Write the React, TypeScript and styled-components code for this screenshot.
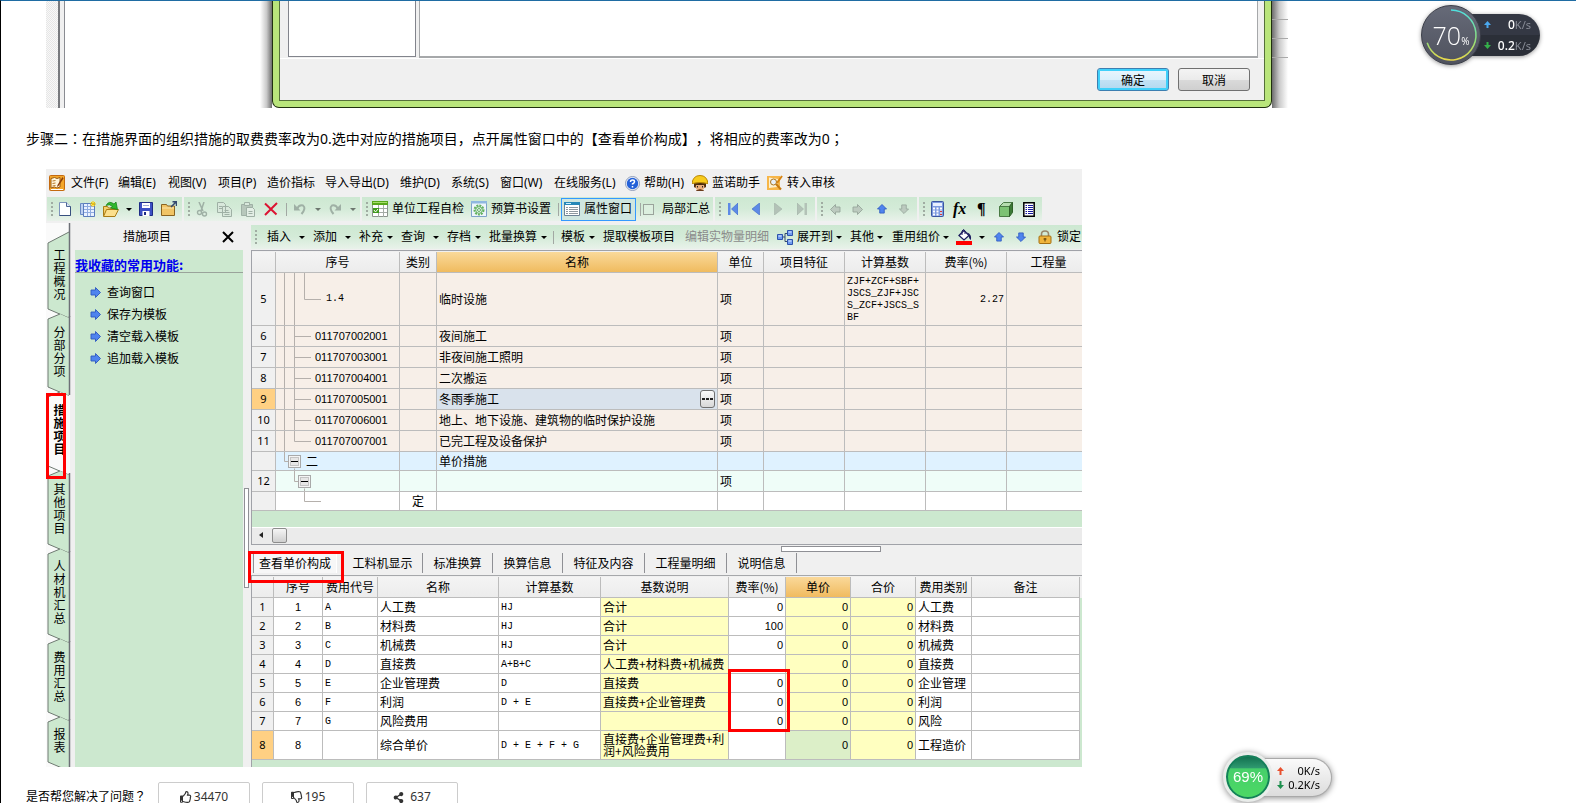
import React from "react";
import styled, { createGlobalStyle, css } from "styled-components";
import { FaRegThumbsUp, FaRegThumbsDown, FaShareAlt } from "react-icons/fa";

const sans = '"Noto Sans", "Noto Sans CJK SC", sans-serif';
const cjk = '"Noto Sans CJK SC", sans-serif';
const mono = '"Liberation Mono", "Noto Sans CJK SC", monospace';
const green = "#cce8cf";
const face = "#f0f0f0";
const line = "#bcbcbc";

const GlobalStyle = createGlobalStyle`
  *, *::before, *::after { box-sizing: border-box; }
  body { margin: 0; background: #fff; color: #000; font: 12px/16px ${sans}; text-spacing-trim: space-all; }
  button { font: inherit; color: inherit; padding: 0; border: 0; background: none; cursor: pointer; }
  svg { display: block; flex: none; }
`;

const Page = styled.div`
  position: relative;
  height: 100vh;
  overflow: hidden;
  border-left: 1px solid #000;
  border-top: 1px solid #1f6ca3;
`;

/* ---------- dialog at the top ---------- */
const DialogShot = styled.div`
  display: flex;
  max-width: 1242px;
  height: 107px;
  margin-left: 45px;
  overflow: hidden;
`;
const Edge = styled.div`
  flex: none;
  width: 19px;
  margin-right: 195px;
  background: #f0f0f0;
  border-right: 1px solid #8a8c92;
  display: flex;
  &::before {
    content: "";
    width: 14px;
    border-right: 2px solid #77797d;
    background: repeating-conic-gradient(#e6e6e6 0 25%, #f8f8f8 0 50%) 0 0 / 2px 2px;
  }
`;
const Shade = styled.div<{ $right?: boolean }>`
  flex: none;
  width: ${(p) => (p.$right ? 16 : 12)}px;
  background: linear-gradient(${(p) => (p.$right ? "to right" : "to left")}, #6d6d6d, #c9c9c9 45%, #fff);
  ${(p) =>
    p.$right &&
    css`
      background:
        repeating-linear-gradient(transparent 0 18px, #a9a9a9 18px 19px) 0 0 / 100% 57px no-repeat,
        linear-gradient(to right, #6d6d6d, #c9c9c9 45%, #fff);
    `}
`;
const Dialog = styled.section`
  flex: 1;
  min-width: 0;
  border: solid #20300f;
  border-width: 0 1px 1px;
  border-radius: 0 0 7px 7px;
  background: #b9e57b;
  padding: 0 6px 6px;
`;
const DialogInner = styled.div`
  height: 100%;
  border: solid #55703a;
  border-width: 0 1px 1px;
  background: ${face};
  display: flex;
  flex-direction: column;
`;
const Panes = styled.div`
  display: flex;
  gap: 3px;
  height: 58px;
  padding: 0 6px 0 8px;
  border-bottom: 1px solid #fff;
`;
const Pane = styled.div<{ $grow?: boolean }>`
  background: #fff;
  border: 1px solid #82848c;
  border-top: 0;
  ${(p) => (p.$grow ? "flex: 1; border-bottom-width: 2px; border-color: #a6a8aa;" : "width: 128px; height: 56px;")}
`;
const DialogButtons = styled.div`
  display: flex;
  justify-content: flex-end;
  gap: 9px;
  padding: 9px 14px 0 0;
`;
const WinButton = styled.button<{ $primary?: boolean }>`
  width: 72px;
  height: 23px;
  border: 1px solid #707070;
  border-radius: 3px;
  background: linear-gradient(#f4f4f4, #ebebeb 50%, #dadada 51%, #cfcfcf);
  font-family: ${cjk};
  ${(p) =>
    p.$primary &&
    css`
      border-color: #3c7fb1;
      box-shadow: inset 0 0 0 2px #3fd0fa;
      background: linear-gradient(#eaf6fd, #d9f0fc 50%, #c3e2f5 51%, #b0d8ef);
    `}
`;

const Step = styled.p`
  margin: 20px 25px 0;
  font-size: 14px;
  line-height: 22px;
`;
const Mid = styled.span`
  font-family: "Noto Sans CJK TC", sans-serif;
  line-height: 1px;
`;

/* ---------- application window ---------- */
const AppWindow = styled.section`
  position: relative;
  max-width: 1036px;
  margin: 19px 0 0 45px;
  background: ${face};
  overflow: hidden;
`;
const MenuBar = styled.nav`
  display: flex;
  align-items: center;
  height: 28px;
  padding-left: 3px;
`;
const Slot = styled.button<{ $w: number; $muted?: boolean }>`
  flex: none;
  width: ${(p) => p.$w}px;
  height: 24px;
  display: flex;
  align-items: center;
  text-align: left;
  white-space: nowrap;
  color: ${(p) => (p.$muted ? "#8b8b8b" : "#000")};
`;
const Toolbar = styled.div`
  display: flex;
  gap: 2px;
  height: 26px;
  padding-left: 1px;
`;
const Band = styled.div<{ $w?: number }>`
  display: flex;
  align-items: center;
  height: 24px;
  ${(p) => (p.$w ? `flex: none; width: ${p.$w}px;` : "margin-top: 2px;")}
  background: linear-gradient(#cde8d2, #d4ebd8 50%, #e9f2ea);
  overflow: hidden;
`;
const Grip = styled.span<{ $w: number }>`
  flex: none;
  width: ${(p) => p.$w}px;
  height: 15px;
  padding-left: 4px;
  &::before {
    content: "";
    display: block;
    width: 2px;
    height: 100%;
    background: repeating-linear-gradient(#a0aca2 0 2px, transparent 2px 4px);
  }
`;
const Sep = styled.span<{ $w: number }>`
  flex: none;
  width: ${(p) => p.$w}px;
  height: 13px;
  border-left: 1px solid #a2a8a3;
`;
const Toggled = styled.button`
  flex: none;
  width: 75px;
  height: 23px;
  margin-right: 4px;
  display: flex;
  align-items: center;
  gap: 4px;
  padding-left: 2px;
  border: 1px solid #3399ff;
  background: #cfe6e0;
  white-space: nowrap;
`;
const Check = styled.label`
  display: flex;
  align-items: center;
  gap: 8px;
  white-space: nowrap;
  input {
    appearance: none;
    width: 11px;
    height: 11px;
    margin: 0;
    border: 1px solid #9aa39b;
    background: #dcefdf;
  }
`;
const Glyph = styled.span<{ $italic?: boolean }>`
  font: ${(p) => (p.$italic ? "italic" : "normal")} bold 16px/16px "Liberation Serif", serif;
`;

const Body = styled.div`
  display: flex;
`;
const SideTabs = styled.nav`
  flex: none;
  width: 29px;
  padding-top: 15px;
  padding-left: 2px;
  overflow: hidden;
  background: linear-gradient(to right, #fafafa 0 24px, ${face} 24px);
`;
const SideTab = styled.button<{ $h: number; $active?: boolean }>`
  position: relative;
  display: flex;
  align-items: center;
  justify-content: center;
  width: 23px;
  height: ${(p) => p.$h}px;
  padding-bottom: 5px;
  line-height: 13px;
  font-family: ${cjk};
  font-weight: ${(p) => (p.$active ? 700 : 400)};
  svg {
    position: absolute;
    left: 0;
    top: 0;
    overflow: visible;
  }
  span {
    position: relative;
    width: 12px;
  }
`;
const Side = styled.aside`
  flex: none;
  width: 168px;
  display: flex;
  flex-direction: column;
`;
const SideHead = styled.div`
  display: flex;
  align-items: center;
  height: 27px;
  padding: 0 9px 0 48px;
  justify-content: space-between;
`;
const SideBody = styled.div`
  flex: 1;
  background: ${green};
`;
const SideTitle = styled.h2`
  margin: 0 0 8px;
  height: 23px;
  padding-top: 7px;
  border-bottom: 1px solid #9aa39b;
  color: #0000f0;
  font: bold 13px/16px ${cjk};
`;
const SideLink = styled.a`
  display: flex;
  align-items: center;
  gap: 6px;
  height: 22px;
  padding-left: 15px;
  color: #000;
  text-decoration: none;
  font-family: ${cjk};
`;
const Splitter = styled.div`
  flex: none;
  width: 8px;
  padding: 265px 2px 0 1px;
  &::before {
    content: "";
    display: block;
    height: 100px;
    border: 1px solid #8f9095;
    background: #fff;
  }
`;
const Main = styled.main`
  flex: 1;
  min-width: 0;
`;
const Frame = styled.div`
  border-left: 1px solid #a0a2a8;
`;
const TopLine = styled.div`
  height: 2px;
  margin-top: 1px;
  border-top: 1px solid #a0a2a8;
`;

/* ---------- grids ---------- */
const Grid = styled.table`
  width: 100%;
  table-layout: fixed;
  border-collapse: separate;
  border-spacing: 0;
  font-family: ${cjk};
  line-height: 12px;
`;
const Th = styled.th<{ $hot?: boolean }>`
  height: 21px;
  padding: 0;
  border: solid ${line};
  border-width: 0 1px 1px 0;
  background: ${(p) => (p.$hot ? "linear-gradient(#fad99a, #f0bb5f)" : "linear-gradient(#f4f4f4, #ececec)")};
  font-weight: 400;
  white-space: nowrap;
`;
const LastTh = styled(Th)`
  border-right: 0;
  padding-left: 8px;
`;
type CellProps = { $h?: number; $bg?: string; $align?: string; $mono?: boolean; $num?: boolean; $flush?: boolean };
const Td = styled.td<CellProps>`
  height: ${(p) => p.$h ?? 19}px;
  padding: ${(p) => (p.$flush ? "0" : p.$mono ? "2px 2px 0" : "0 2px")};
  border: solid ${line};
  border-width: 0 1px 1px 0;
  background: ${(p) => p.$bg ?? "#fff"};
  text-align: ${(p) => p.$align ?? "left"};
  vertical-align: middle;
  white-space: nowrap;
  overflow: hidden;
  ${(p) => p.$mono && `font-family: ${mono}; font-size: 10px;`}
  ${(p) => p.$num && `font-family: "Liberation Sans", sans-serif; font-size: 11px;`}
`;
const LastTd = styled(Td)`
  border-right: 0;
`;
const RowHead = styled(Th)<{ $on?: boolean; $h?: number }>`
  height: ${(p) => p.$h ?? 19}px;
  background: ${(p) => (p.$on ? "#ffd083" : face)};
  font-family: ${sans};
  font-size: 11px;
`;
const Wrap = styled.span`
  display: block;
  white-space: normal;
  word-break: break-all;
`;
const Tree = styled.div`
  display: flex;
  align-items: center;
  gap: 5px;
`;
const NameCell = styled.div`
  display: flex;
  justify-content: space-between;
  align-items: center;
`;
const Dots = styled.button`
  width: 15px;
  height: 18px;
  border: 1px solid #707070;
  border-radius: 3px;
  background: linear-gradient(#fafafa, #d8d8d8);
  display: flex;
  align-items: center;
  justify-content: center;
`;
const Filler = styled.div<{ $h: number }>`
  height: ${(p) => p.$h}px;
  background: ${green};
`;
const ScrollBar = styled.div`
  display: flex;
  align-items: center;
  gap: 9px;
  height: 18px;
  padding: 0 0 2px 7px;
  background: #ebebeb;
  border-bottom: 1px solid #a0a2a8;
  border-top: 1px solid #fff;
`;
const Thumb = styled.span`
  width: 15px;
  height: 15px;
  border: 1px solid #8c8c8c;
  border-radius: 2px;
  background: linear-gradient(#f5f5f5, #cfcfcf);
`;
const HandleRow = styled.div`
  height: 8px;
  padding: 1px 201px 0 0;
  display: flex;
  justify-content: flex-end;
  &::before {
    content: "";
    width: 100px;
    height: 6px;
    border: 1px solid #8f9095;
    background: #fff;
  }
`;
const Tabs = styled.div`
  display: flex;
  height: 23px;
  padding-left: 2px;
  border-bottom: 1px solid #a6a8ab;
`;
const Tab = styled.button<{ $w: number; $active?: boolean }>`
  flex: none;
  width: ${(p) => p.$w}px;
  height: 20px;
  border-right: 1px solid #8f9095;
  font-family: ${cjk};
  ${(p) => p.$active && "border-left: 1px solid #8f9095; background: #f7f7f7; border-right-color: #fff; margin-right: 6px;"}
`;
const BottomArea = styled.div`
  padding: 1px 2px 7px 0;
  background: linear-gradient(${face} 22px, ${green} 22px);
`;
const Mark = styled.div<{ $x: number; $y: number; $w: number; $h: number }>`
  position: absolute;
  left: ${(p) => p.$x}px;
  top: ${(p) => p.$y}px;
  width: ${(p) => p.$w}px;
  height: ${(p) => p.$h}px;
  border: 3px solid #f00;
  pointer-events: none;
`;

/* ---------- feedback row ---------- */
const Feedback = styled.footer`
  display: flex;
  gap: 12px;
  padding: 15px 0 0 25px;
  line-height: 12px;
`;
const Ask = styled.span`
  width: 120px;
  padding-top: 9px;
  white-space: nowrap;
`;
const Vote = styled.button<{ $gap: number }>`
  display: flex;
  align-items: center;
  justify-content: center;
  gap: ${(p) => p.$gap}px;
  width: 92px;
  height: 30px;
  border: 1px solid #ccc;
  border-radius: 2px;
  color: #333;
`;

/* ---------- floating meters ---------- */
const DarkMeter = styled.div`
  position: absolute;
  right: 36px;
  top: 4px;
  display: flex;
  align-items: center;
  filter: drop-shadow(0 1px 2px rgba(0, 0, 0, 0.4));
`;
const DarkDial = styled.div`
  position: relative;
  z-index: 1;
  width: 60px;
  height: 60px;
  margin-right: -19px;
  border-radius: 50%;
  border: 1px solid #3b3e49;
  background: linear-gradient(#666a78, #4f525e);
  display: flex;
  align-items: center;
  justify-content: center;
  color: #fff;
  font: 300 25px/30px "Open Sans", sans-serif;
  svg {
    position: absolute;
    inset: 0;
  }
  small {
    font-size: 10px;
    font-weight: 400;
    align-self: flex-end;
    margin-bottom: 8px;
  }
`;
const DarkRates = styled.div`
  width: 78px;
  height: 42px;
  padding: 0 9px 0 22px;
  border-radius: 0 21px 21px 0;
  background: linear-gradient(#343844 50%, #2b2f38 50%);
`;
const Rate = styled.div<{ $h: number }>`
  display: flex;
  align-items: center;
  height: ${(p) => p.$h}px;
  font-size: 11px;
  span {
    margin-left: auto;
  }
`;
const White = styled.b`
  color: #fff;
  font-size: 12px;
  font-weight: 500;
`;
const Dim = styled.i`
  color: #888c96;
  font-style: normal;
`;
const LightMeter = styled.div`
  position: absolute;
  right: 244px;
  bottom: 1px;
  display: flex;
  align-items: center;
  filter: drop-shadow(0 1px 3px rgba(0, 0, 0, 0.45));
`;
const GreenDial = styled.div`
  position: relative;
  z-index: 1;
  width: 50px;
  height: 50px;
  margin-right: -20px;
  border-radius: 50%;
  border: 3px solid #e9ecea;
  box-shadow: inset 0 0 0 2px #14805a;
  background: linear-gradient(#0f6b4c, #2f9a70 30%, #46cf6a 31%, #4cd964);
  display: flex;
  align-items: center;
  justify-content: center;
  color: #fff;
  font: 15px/20px "Liberation Sans", sans-serif;
`;
const LightRates = styled.div`
  width: 79px;
  height: 39px;
  padding: 5px 11px 0 24px;
  border: 1px solid #a9a9a9;
  border-left: 0;
  border-radius: 0 20px 20px 0;
  background: linear-gradient(#fafafa, #dcdcdc);
`;

/* ---------- icons ---------- */
const Ico = ({ w = 16, h = 16, children }: { w?: number; h?: number; children: React.ReactNode }) => (
  <svg width={w} height={h} viewBox={`0 0 ${w} ${h}`} fill="none">
    {children}
  </svg>
);
const Caret = ({ muted }: { muted?: boolean }) => (
  <Ico w={6} h={3}>
    <path d="M0 0H6L3 3Z" fill={muted ? "#6d776f" : "#000"} />
  </Ico>
);
const AppIcon = () => (
  <Ico>
    <rect x=".5" y=".5" width="15" height="15" rx="1" fill="#f3a62a" stroke="#c46a10" />
    <path d="M2 3.500l3.500-1 2.500 1 3-1V12l-3 1-2.500-1-3.500 1z" fill="#fff6da" stroke="#9a5a10" />
    <path d="M3.500 6l3-.5M3.500 8.500l3-.5M3.500 11l3-.5" stroke="#b87a2a" />
    <path d="M13.500 2L8.500 10l-.5 2 1.500-1L14.500 3.500z" fill="#8a3d0a" />
    <path d="M2 14.500h12" stroke="#fff" />
  </Ico>
);
const HelpIcon = () => (
  <Ico w={15} h={15}>
    <circle cx="7.500" cy="7.500" r="7" fill="#f2f5fb" stroke="#8d9bb8" />
    <circle cx="7.500" cy="7.500" r="5.700" fill="#2461d8" />
    <path d="M5.500 6q0-2 2-2t2 1.700q0 1-2 2.300v.6M7.500 10v1.500" stroke="#fff" strokeWidth="1.500" />
  </Ico>
);
const WorkerIcon = () => (
  <Ico>
    <path d="M3 8h10v4l-2 3H5l-2-3z" fill="#e9ad7c" />
    <path d="M2 7h12v5l-1.500 1L12 10H4l-.5 3L2 12z" fill="#4a2a10" />
    <path d="M0 8.500Q1 .5 8 .5t8 8q-8-2-16 0z" fill="#f7cb1c" stroke="#b98704" />
    <path d="M5.500 11v1.500M10.500 11v1.500" stroke="#222" />
    <path d="M4 15.500l4-1.500 4 1.500v.5H4z" fill="#6b3a1a" />
  </Ico>
);
const AuditIcon = () => (
  <Ico>
    <path d="M0 1h13v14H0z" fill="#f7b648" />
    <path d="M2 2.500l9 1.500-1 8-8 1z" fill="#fdf0cf" />
    <circle cx="6.500" cy="7" r="3" fill="#e8f0f8" stroke="#a9741e" />
    <path d="M9 9l5 5.500" stroke="#c67a12" strokeWidth="2" />
    <path d="M15 1l-5 7" stroke="#d88410" strokeWidth="2" />
  </Ico>
);
const NewIcon = () => (
  <Ico w={12} h={14}>
    <path d="M.5.5h7l4 4v9H.5z" fill="#fff" stroke="#7d93bb" />
    <path d="M7.500.5v4h4" fill="#dbe5f5" stroke="#4c6595" />
    <path d="M11.500 4.500v9H.5" stroke="#38507f" />
  </Ico>
);
const SheetIcon = () => (
  <Ico>
    <path d="M.5 2.500h3v11h-3z" fill="#bcd0f2" stroke="#6a8ac4" />
    <path d="M3.500 2.500h11v13h-11z" fill="#e9f1ff" stroke="#5a7cbc" />
    <path d="M4 5.500h10M4 8.500h10M4 11.500h10M7.500 3v12M10.500 3v12" stroke="#8fabe0" />
    <path d="M13 0v6M10 3h6M11 1l4 4M15 1l-4 4" stroke="#f5c800" />
  </Ico>
);
const OpenIcon = () => (
  <Ico>
    <path d="M.5 15V5.500h4l1 1.500h6v2" fill="#f5d06a" stroke="#a87c14" />
    <path d="M.5 15.500l3-7h12l-3.500 7z" fill="#fbe08c" stroke="#a87c14" />
    <path d="M3 4.500Q6-1 11 3l2-2 1.500 7.500L7.500 7l2-1.500Q6.500 2.500 3 4.500z" fill="#2eb82e" stroke="#0e7a12" strokeWidth=".7" />
  </Ico>
);
const SaveIcon = () => (
  <Ico w={14} h={14}>
    <path d="M.5.5h13v13h-13z" fill="#3c50c4" stroke="#1f2d86" />
    <path d="M3 1h8v5H3zM3.500 9h7v5h-7z" fill="#fff" />
    <path d="M4 3.500h6" stroke="#9aa8d8" />
    <path d="M5 10h2v3H5z" fill="#1f2d86" />
  </Ico>
);
const FolderIcon = () => (
  <Ico>
    <path d="M.5 3.500h5l1 1.500h7v9.500H.5z" fill="#f1c565" stroke="#8a6420" />
    <path d="M1 7h12" stroke="#fbe5a8" />
    <path d="M10 6l5-5M11.500.8h4V5" stroke="#33486e" strokeWidth="1.500" />
  </Ico>
);
const gray = "#9fb0a5";
const CutIcon = () => (
  <Ico w={12} h={15}>
    <path d="M3 0l4 9M8 0L5 9" stroke={gray} strokeWidth="1.500" />
    <circle cx="3.500" cy="10.500" r="2" stroke={gray} strokeWidth="1.400" />
    <circle cx="8.500" cy="12" r="2" stroke={gray} strokeWidth="1.400" />
  </Ico>
);
const CopyIcon = () => (
  <Ico w={15} h={15}>
    <path d="M.5.5h6l2 2v8h-8zM5.500 4.500h6l3 3v7h-9z" fill="#d9e8dc" stroke={gray} />
    <path d="M2 4.500h3M2 6.500h3M7.500 8.500h4M7.500 10.500h5M7.500 12.500h5" stroke={gray} />
  </Ico>
);
const PasteIcon = () => (
  <Ico w={14} h={15}>
    <path d="M.5 2.500h11v11H.5z" fill="#b7c7bb" stroke={gray} />
    <path d="M3.500.5h5v3h-5z" fill="#d9e8dc" stroke={gray} />
    <path d="M5.500 5.500h6l2 2v7h-8z" fill="#e3eee5" stroke={gray} />
    <path d="M7.500 9.500h4M7.500 11.500h4" stroke={gray} />
  </Ico>
);
const DeleteIcon = () => (
  <Ico w={14} h={14}>
    <path d="M1 1.500l11.500 11M13 1L1 13" stroke="#dc1432" strokeWidth="2" />
  </Ico>
);
const UndoIcon = ({ flip }: { flip?: boolean }) => (
  <Ico w={12} h={12}>
    <g transform={flip ? "matrix(-1 0 0 1 12 0)" : undefined}>
      <path d="M3 6Q5 1.500 9 2.500 12.500 5 7.500 11" stroke={gray} strokeWidth="2" />
      <path d="M0 1v6.500h6.500z" fill={gray} />
    </g>
  </Ico>
);
const CheckSheetIcon = () => (
  <Ico>
    <path d="M.5.5h15v15H.5z" fill="#fff" stroke="#8b958d" />
    <path d="M0 0h16v4H0z" fill="#57a81a" />
    <path d="M1 1.500h14" stroke="#a5dd6a" />
    <path d="M1 7.500h14M1 11.500h14M6.500 4v12M11.500 4v12" stroke="#a4aca6" />
    <path d="M1 7h6v5H1z" fill="#3f9a1c" />
    <path d="M2 9l1.500 2L6 8" stroke="#fff" />
  </Ico>
);
const GearIcon = () => (
  <Ico>
    <path d="M.5.5h15v15H.5z" fill="#eef5fb" stroke="#7fa3c8" />
    <path d="M0 0h16v2.500H0z" fill="#8fb8e0" />
    <circle cx="8" cy="9" r="4.500" stroke="#63b25e" strokeWidth="2" strokeDasharray="2 1" />
    <circle cx="8" cy="9" r="3.300" stroke="#63b25e" />
    <circle cx="8" cy="9" r="1.500" stroke="#63b25e" />
  </Ico>
);
const PropIcon = () => (
  <Ico>
    <path d="M.5 1.500h15v13H.5z" fill="#fff" stroke="#6c8296" />
    <path d="M0 1h16v3H0z" fill="#2688b8" />
    <path d="M2 2.500h5" stroke="#cdefff" />
    <path d="M2 6.500h2M5 6.500h9M2 8.500h2M5 8.500h9M2 10.500h2M5 10.500h9M2 12.500h2M5 12.500h9" stroke="#8d979f" />
  </Ico>
);
const NavIcon = ({ dir, bar, muted }: { dir: "l" | "r"; bar?: boolean; muted?: boolean }) => {
  const c = muted ? "#b3c2b7" : "#5d8ae6";
  return (
    <Ico w={10} h={12}>
      <g transform={dir === "r" ? "matrix(-1 0 0 1 10 0)" : undefined}>
        {bar && <path d="M0 0h2.500v12H0z" fill={c} />}
        <path d={bar ? "M10 0v12L3.500 6z" : "M7.500 0v12L0 6z"} fill={c} stroke={muted ? "#a3b2a7" : "#3d66c8"} strokeWidth=".6" />
      </g>
    </Ico>
  );
};
const Arrow = ({ rot, muted, size = 11 }: { rot: number; muted?: boolean; size?: number }) => (
  <svg width={size} height={size} viewBox="0 0 11 11" fill="none">
    <g transform={`rotate(${rot} 5.5 5.5)`}>
      <path
        d="M5.500.5L10.500 5.500H8V10H3V5.500H.5Z"
        fill={muted ? "#bccabf" : "#4f84ee"}
        stroke={muted ? "#96a69b" : "#2d58c0"}
        strokeWidth=".9"
      />
    </g>
  </svg>
);
const CalcIcon = () => (
  <Ico w={13} h={16}>
    <rect x=".5" y=".5" width="12" height="15" rx="1" fill="#7d9be0" stroke="#3a55a0" />
    <path d="M2 2h9v3H2z" fill="#e8f0ff" />
    <path d="M2 7.500h9M2 10.500h9M2 13.500h9" stroke="#fff" strokeWidth="2" strokeDasharray="2 1.500" />
    <path d="M9 10h2v1H9zM9 13h2v1H9z" fill="#d83a3a" />
  </Ico>
);
const CubeIcon = () => (
  <Ico w={14} h={15}>
    <path d="M.5 4.500l4-4h9l-3 4z" fill="#b5dcae" stroke="#4a7a45" />
    <path d="M.5 4.500h10v10H.5z" fill="#7cc273" stroke="#4a7a45" />
    <path d="M10.500 4.500l3-4v10l-3 4z" fill="#3b7a35" stroke="#2f6029" />
  </Ico>
);
const ListIcon = () => (
  <Ico w={12} h={15}>
    <path d="M.8.8h10.400v13.400H.8z" fill="#fff" stroke="#000" strokeWidth="1.500" />
    <path d="M2.500 3.500h1.500M5 3.500h5M2.500 5.500h1.500M5 5.500h5M2.500 7.500h1.500M5 7.500h5M2.500 9.500h1.500M5 9.500h5M2.500 11.500h1.500M5 11.500h5" stroke="#16169c" />
  </Ico>
);
const ExpandIcon = () => (
  <Ico w={17} h={15}>
    <path d="M5 7h3M8 3.500v8M8 3.500h3M8 11.500h3" stroke="#33486e" />
    <path d="M.5 4.500h5v5h-5zM10.500.5h5v5h-5zM10.500 9.500h5v5h-5z" fill="#6f9bf0" stroke="#2d52ac" />
    <path d="M1.500 6h3M11.500 2h3M11.500 11h3" stroke="#e6efff" />
  </Ico>
);
const BucketIcon = () => (
  <Ico>
    <path d="M3 6.500l5-5 5 5-5 4.500z" fill="#fff" stroke="#1b1b5e" strokeWidth="1.300" />
    <path d="M6 6V2q1.500-3 3 0v3" stroke="#1b1b5e" />
    <path d="M11 3.500q5 1.500 4 7.500Q12.500 9.500 13 6.500z" fill="#1b1b5e" />
    <path d="M0 12h16v4H0z" fill="#f00" />
  </Ico>
);
const LockIcon = () => (
  <Ico w={14} h={14}>
    <path d="M3.500 7V4Q3.500 1 7 1t3.500 3v3" stroke="#98866a" strokeWidth="1.600" />
    <rect x="1" y="6" width="12" height="7.500" rx="1" fill="#f0b53c" stroke="#a36f12" />
    <path d="M7 8v3.500M5.500 9h3" stroke="#5d3e05" />
  </Ico>
);
const CloseIcon = () => (
  <Ico w={12} h={12}>
    <path d="M1 1l10 10M11 1L1 11" stroke="#000" strokeWidth="2" />
  </Ico>
);

const T = ({ w, children, muted, label }: { w: number; children: React.ReactNode; muted?: boolean; label?: string }) => (
  <Slot $w={w} $muted={muted} aria-label={label}>
    {children}
  </Slot>
);

/* ---------- data ---------- */
const sideTabs: [string, number][] = [
  ["工程概况", 76],
  ["分部分项", 78],
  ["措施项目", 79],
  ["其他项目", 78],
  ["人材机汇总", 90],
  ["费用汇总", 78],
  ["报表", 50],
];

const peach = "#f7efe8";
type Row = { n: string; tree: string; code?: string; cls?: string; name?: string; unit?: string; h: number; bg: string };
const rows: Row[] = [
  { n: "5", tree: "deep", code: "1.4", name: "临时设施", unit: "项", h: 53, bg: peach },
  { n: "6", tree: "mid", code: "011707002001", name: "夜间施工", unit: "项", h: 21, bg: peach },
  { n: "7", tree: "mid", code: "011707003001", name: "非夜间施工照明", unit: "项", h: 21, bg: peach },
  { n: "8", tree: "mid", code: "011707004001", name: "二次搬运", unit: "项", h: 21, bg: peach },
  { n: "9", tree: "mid", code: "011707005001", name: "冬雨季施工", unit: "项", h: 21, bg: peach },
  { n: "10", tree: "mid", code: "011707006001", name: "地上、地下设施、建筑物的临时保护设施", unit: "项", h: 21, bg: peach },
  { n: "11", tree: "end", code: "011707007001", name: "已完工程及设备保护", unit: "项", h: 21, bg: peach },
  { n: "", tree: "box1", code: "二", name: "单价措施", h: 19, bg: "#dff2ff" },
  { n: "12", tree: "box2", unit: "项", h: 21, bg: "#effdf8" },
  { n: "", tree: "leaf", cls: "定", h: 19, bg: "#fff" },
];

const MinusBox = ({ x, y }: { x: number; y: number }) => (
  <g>
    <rect x={x + 0.5} y={y - 5.5} width="12" height="12" fill="#f4f4f4" stroke="#a9a9a9" />
    <rect x={x + 2.5} y={y - 3.5} width="8" height="8" fill="#e6e6e6" stroke="#c4c4c4" />
    <path d={`M${x + 3} ${y + 0.5}h7`} stroke="#000" />
  </g>
);
const TreeLines = ({ kind, h }: { kind: string; h: number }) => {
  const m = Math.floor((h - 1) / 2) + 0.5;
  const b = h - 1;
  const paths: Record<string, string> = {
    deep: `M8.500 0V${b}M18.500 0V${b}M28.500 0V${m}H45`,
    mid: `M8.500 0V${b}M18.500 0V${b}M18.500 ${m}H35`,
    end: `M8.500 0V${b}M18.500 0V${m}H35`,
    box1: `M8.500 0V${m}H12M18.500 ${m + 7}V${b}`,
    box2: `M18.500 0V${m}H22M28.500 ${m + 7}V${b}`,
    leaf: `M28.500 0V${m}H45`,
  };
  const widths: Record<string, number> = { deep: 45, mid: 34, end: 34, box1: 25, box2: 46, leaf: 46 };
  const w = widths[kind];
  return (
    <svg width={w} height={b} viewBox={`0 0 ${w} ${b}`} overflow="visible">
      <path d={paths[kind]} stroke="#b5b0ac" fill="none" />
      {kind === "box1" && <MinusBox x={12} y={m - 0.5} />}
      {kind === "box2" && <MinusBox x={22} y={m - 0.5} />}
    </svg>
  );
};

type Fee = [string, string, string, string, string, string, string];
const fees: Fee[] = [
  ["1", "A", "人工费", "HJ", "合计", "0", "人工费"],
  ["2", "B", "材料费", "HJ", "合计", "100", "材料费"],
  ["3", "C", "机械费", "HJ", "合计", "0", "机械费"],
  ["4", "D", "直接费", "A+B+C", "人工费+材料费+机械费", "", "直接费"],
  ["5", "E", "企业管理费", "D", "直接费", "0", "企业管理"],
  ["6", "F", "利润", "D + E", "直接费+企业管理费", "0", "利润"],
  ["7", "G", "风险费用", "", "", "0", "风险"],
  ["8", "", "综合单价", "D + E + F + G", "直接费+企业管理费+利润+风险费用", "", "工程造价"],
];

const Cols = ({ w }: { w: number[] }) => (
  <colgroup>
    {w.map((x, i) => (
      <col key={i} width={x || undefined} />
    ))}
  </colgroup>
);

export default function App() {
  const yellow = "#ffffc0";
  return (
    <Page>
      <GlobalStyle />
      <DialogShot>
        <Edge />
        <Shade />
        <Dialog>
          <DialogInner>
            <Panes>
              <Pane />
              <Pane $grow />
            </Panes>
            <DialogButtons>
              <WinButton $primary>确定</WinButton>
              <WinButton>取消</WinButton>
            </DialogButtons>
          </DialogInner>
        </Dialog>
        <Shade $right />
      </DialogShot>

      <Step>
        步骤二<Mid>：</Mid>在措施界面的组织措施的取费费率改为0.选中对应的措施项目，点开属性窗口中的【查看单价构成】，将相应的费率改为0
        <Mid>；</Mid>
      </Step>

      <AppWindow>
        <MenuBar>
          <T w={22} label="应用"><AppIcon /></T>
          <T w={47}>文件(F)</T>
          <T w={50}>编辑(E)</T>
          <T w={50}>视图(V)</T>
          <T w={49}>项目(P)</T>
          <T w={58}>造价指标</T>
          <T w={75}>导入导出(D)</T>
          <T w={51}>维护(D)</T>
          <T w={49}>系统(S)</T>
          <T w={54}>窗口(W)</T>
          <T w={71}>在线服务(L)</T>
          <T w={19} label="帮助图标"><HelpIcon /></T>
          <T w={48}>帮助(H)</T>
          <T w={20} label="助手图标"><WorkerIcon /></T>
          <T w={55}>蓝诺助手</T>
          <T w={20} label="审核图标"><AuditIcon /></T>
          <T w={60}>转入审核</T>
        </MenuBar>

        <Toolbar>
          <Band $w={135}>
            <Grip $w={12} />
            <T w={21} label="新建"><NewIcon /></T>
            <T w={23} label="新建表"><SheetIcon /></T>
            <T w={23} label="打开"><OpenIcon /></T>
            <T w={13} label="更多"><Caret /></T>
            <T w={22} label="保存"><SaveIcon /></T>
            <T w={20} label="另存"><FolderIcon /></T>
          </Band>
          <Band $w={176}>
            <Grip $w={12} />
            <T w={21} label="剪切"><CutIcon /></T>
            <T w={24} label="复制"><CopyIcon /></T>
            <T w={23} label="粘贴"><PasteIcon /></T>
            <T w={22} label="删除"><DeleteIcon /></T>
            <Sep $w={8} />
            <T w={21} label="撤销"><UndoIcon /></T>
            <T w={14} label="撤销列表"><Caret muted /></T>
            <T w={21} label="重做"><UndoIcon flip /></T>
            <T w={10} label="重做列表"><Caret muted /></T>
          </Band>
          <Band $w={351}>
            <Grip $w={10} />
            <T w={20} label="自检图标"><CheckSheetIcon /></T>
            <T w={79}>单位工程自检</T>
            <T w={20} label="设置图标"><GearIcon /></T>
            <T w={67}>预算书设置</T>
            <Sep $w={3} />
            <Toggled><PropIcon />属性窗口</Toggled>
            <Sep $w={3} />
            <Check>
              <input type="checkbox" />
              局部汇总
            </Check>
          </Band>
          <Band $w={100}>
            <Grip $w={13} />
            <T w={24} label="首条"><NavIcon dir="l" bar /></T>
            <T w={20} label="上一条"><NavIcon dir="l" /></T>
            <T w={25} label="下一条"><NavIcon dir="r" muted /></T>
            <T w={12} label="末条"><NavIcon dir="r" bar muted /></T>
          </Band>
          <Band $w={100}>
            <Grip $w={13} />
            <T w={22} label="左移"><Arrow rot={-90} muted /></T>
            <T w={25} label="右移"><Arrow rot={90} muted /></T>
            <T w={22} label="上移"><Arrow rot={0} size={10} /></T>
            <T w={12} label="下移"><Arrow rot={180} size={10} muted /></T>
          </Band>
          <Band $w={123}>
            <Grip $w={12} />
            <T w={22} label="计算器"><CalcIcon /></T>
            <T w={24}><Glyph $italic>fx</Glyph></T>
            <T w={22}><Glyph>¶</Glyph></T>
            <T w={24} label="三维"><CubeIcon /></T>
            <T w={14} label="列表"><ListIcon /></T>
          </Band>
        </Toolbar>

        <Body>
          <SideTabs>
            {sideTabs.map(([name, h], i) => {
              const active = i === 2;
              const top = i === 0 ? "M0 5L21-6" : "M0 5L12 0L21 4";
              return (
                <SideTab key={name} $h={h} $active={active}>
                  <svg width="23" height={h}>
                    <path d={`${top}V${h + 4}L0 ${h - 5}Z`} fill={active ? "#fafafa" : green} />
                    <path
                      d={i === 0 ? `M21-6L0 5V${h - 5}L21 ${h + 4}` : `M12 0L0 5V${h - 5}L21 ${h + 4}`}
                      stroke="#6f7a72"
                      fill="none"
                    />
                    {!active && <path d={`M21.500 ${i === 0 ? -16 : 2}V${h + 3}`} stroke="#6d7077" strokeWidth="1.500" />}
                  </svg>
                  <span>{name}</span>
                </SideTab>
              );
            })}
          </SideTabs>
          <Side>
            <SideHead>
              <span>措施项目</span>
              <button aria-label="关闭"><CloseIcon /></button>
            </SideHead>
            <SideBody>
              <SideTitle>我收藏的常用功能:</SideTitle>
              {["查询窗口", "保存为模板", "清空载入模板", "追加载入模板"].map((t) => (
                <SideLink href="#" key={t}>
                  <Arrow rot={90} />
                  {t}
                </SideLink>
              ))}
            </SideBody>
          </Side>
          <Splitter />
          <Main>
            <Band>
              <Grip $w={16} />
              <T w={32}>插入</T><T w={14} label="插入列表"><Caret /></T>
              <T w={32}>添加</T><T w={14} label="添加列表"><Caret /></T>
              <T w={28}>补充</T><T w={14} label="补充列表"><Caret /></T>
              <T w={32}>查询</T><T w={14} label="查询列表"><Caret /></T>
              <T w={28}>存档</T><T w={14} label="存档列表"><Caret /></T>
              <T w={52}>批量换算</T><T w={12} label="换算列表"><Caret /></T>
              <Sep $w={8} />
              <T w={28}>模板</T><T w={14} label="模板列表"><Caret /></T>
              <T w={82}>提取模板项目</T>
              <T w={92} muted>编辑实物量明细</T>
              <T w={20} label="展开图标"><ExpandIcon /></T>
              <T w={39}>展开到</T><T w={14} label="展开列表"><Caret /></T>
              <T w={27}>其他</T><T w={15} label="其他列表"><Caret /></T>
              <T w={51}>重用组价</T><T w={13} label="组价列表"><Caret /></T>
              <T w={23} label="填充色"><BucketIcon /></T><T w={15} label="颜色列表"><Caret /></T>
              <T w={22} label="上移行"><Arrow rot={0} size={10} /></T>
              <T w={22} label="下移行"><Arrow rot={180} size={10} /></T>
              <T w={19} label="锁"><LockIcon /></T>
              <T w={26}>锁定</T>
            </Band>
            <Frame>
              <TopLine />
              <Grid>
                <Cols w={[24, 124, 37, 281, 46, 81, 81, 81, 0]} />
                <thead>
                  <tr>
                    <Th />
                    <Th>序号</Th>
                    <Th>类别</Th>
                    <Th $hot>名称</Th>
                    <Th>单位</Th>
                    <Th>项目特征</Th>
                    <Th>计算基数</Th>
                    <Th>费率(%)</Th>
                    <LastTh>工程量</LastTh>
                  </tr>
                </thead>
                <tbody>
                  {rows.map((r, i) => {
                    const sel = r.n === "9";
                    const c = { $h: r.h, $bg: r.bg };
                    return (
                      <tr key={i}>
                        <RowHead scope="row" $h={r.h} $on={sel}>{r.n}</RowHead>
                        <Td {...c} $flush $mono={r.tree === "deep"} $num={r.tree === "mid" || r.tree === "end"}>
                          <Tree>
                            <TreeLines kind={r.tree} h={r.h} />
                            {r.code && <span>{r.code}</span>}
                          </Tree>
                        </Td>
                        <Td {...c} $align="center">{r.cls}</Td>
                        <Td {...c} $bg={sel ? "#d9e2ec" : r.bg}>
                          <NameCell>
                            {r.name}
                            {sel && (
                              <Dots aria-label="更多">
                                <Ico w={11} h={2}><path d="M0 0h3v2H0zM4 0h3v2H4zM8 0h3v2H8z" fill="#222" /></Ico>
                              </Dots>
                            )}
                          </NameCell>
                        </Td>
                        <Td {...c}>{r.unit}</Td>
                        <Td {...c} />
                        <Td {...c} $mono>{i === 0 && <Wrap>ZJF+ZCF+SBF+JSCS_ZJF+JSCS_ZCF+JSCS_SBF</Wrap>}</Td>
                        <Td {...c} $mono $align="right">{i === 0 && "2.27"}</Td>
                        <LastTd {...c} />
                      </tr>
                    );
                  })}
                </tbody>
              </Grid>
              <Filler $h={16} />
              <ScrollBar>
                <Ico w={4} h={6}><path d="M4 0v6L0 3z" fill="#222" /></Ico>
                <Thumb />
              </ScrollBar>
            </Frame>
            <HandleRow />
            <Tabs>
              <Tab $w={84} $active>查看单价构成</Tab>
              <Tab $w={80}>工料机显示</Tab>
              <Tab $w={70}>标准换算</Tab>
              <Tab $w={70}>换算信息</Tab>
              <Tab $w={82}>特征及内容</Tab>
              <Tab $w={82}>工程量明细</Tab>
              <Tab $w={70}>说明信息</Tab>
            </Tabs>
            <Frame>
              <BottomArea>
                <Grid>
                  <Cols w={[22, 49, 55, 121, 102, 128, 57, 65, 65, 56, 0]} />
                  <thead>
                    <tr>
                      <Th />
                      <Th>序号</Th>
                      <Th>费用代号</Th>
                      <Th>名称</Th>
                      <Th>计算基数</Th>
                      <Th>基数说明</Th>
                      <Th>费率(%)</Th>
                      <Th $hot>单价</Th>
                      <Th>合价</Th>
                      <Th>费用类别</Th>
                      <Th>备注</Th>
                    </tr>
                  </thead>
                  <tbody>
                    {fees.map((f) => {
                      const last = f[0] === "8";
                      const h = last ? 29 : 19;
                      return (
                        <tr key={f[0]}>
                          <RowHead scope="row" $h={h} $on={last}>{f[0]}</RowHead>
                          <Td $h={h} $num $align="center">{f[0]}</Td>
                          <Td $h={h} $mono>{f[1]}</Td>
                          <Td $h={h}>{f[2]}</Td>
                          <Td $h={h} $mono>{f[3]}</Td>
                          <Td $h={h} $bg={yellow}><Wrap>{f[4]}</Wrap></Td>
                          <Td $h={h} $num $align="right">{f[5]}</Td>
                          <Td $h={h} $num $align="right" $bg={last ? "#dcefc8" : yellow}>0</Td>
                          <Td $h={h} $num $align="right" $bg={yellow}>0</Td>
                          <Td $h={h}>{f[6]}</Td>
                          <Td $h={h} />
                        </tr>
                      );
                    })}
                  </tbody>
                </Grid>
              </BottomArea>
            </Frame>
          </Main>
        </Body>

        <Mark $x={0} $y={224} $w={20} $h={86} />
        <Mark $x={202} $y={382} $w={96} $h={32} />
        <Mark $x={682} $y={500} $w={62} $h={63} />
      </AppWindow>

      <Feedback>
        <Ask>是否帮您解决了问题<Mid>？</Mid></Ask>
        <Vote $gap={2}><FaRegThumbsUp size={12} />34470</Vote>
        <Vote $gap={2}><FaRegThumbsDown size={12} />195</Vote>
        <Vote $gap={6}><FaShareAlt size={11} />637</Vote>
      </Feedback>

      <DarkMeter>
        <DarkDial>
          <svg width="58" height="58" viewBox="0 0 58 58" fill="none">
            <defs>
              <linearGradient id="arc" x1="0" y1="0" x2="0" y2="1">
                <stop offset="0" stopColor="#4fe0e0" />
                <stop offset=".6" stopColor="#8fe07a" />
                <stop offset="1" stopColor="#e8d84a" />
              </linearGradient>
            </defs>
            <path d="M29 4A25 25 0 1 1 5.200 36.700" stroke="url(#arc)" strokeWidth="1.500" />
          </svg>
          70<small>%</small>
        </DarkDial>
        <DarkRates>
          <Rate $h={21}>
            <Ico w={7} h={7}><path d="M0 4L3.500 0 7 4H4.500V7h-2V4z" fill="#4aa8ee" /></Ico>
            <span><White>0</White><Dim>K/s</Dim></span>
          </Rate>
          <Rate $h={21}>
            <Ico w={7} h={7}><path d="M0 3l3.500 4L7 3H4.500V0h-2v3z" fill="#35b14a" /></Ico>
            <span><White>0.2</White><Dim>K/s</Dim></span>
          </Rate>
        </DarkRates>
      </DarkMeter>

      <LightMeter>
        <GreenDial>69%</GreenDial>
        <LightRates>
          <Rate $h={14}>
            <Ico w={7} h={8}><path d="M0 4L3.500 0 7 4H4.500V8h-2V4z" fill="#e8502e" /></Ico>
            <span>0K/s</span>
          </Rate>
          <Rate $h={14}>
            <Ico w={7} h={8}><path d="M0 4l3.500 4L7 4H4.500V0h-2v4z" fill="#1e8f4e" /></Ico>
            <span>0.2K/s</span>
          </Rate>
        </LightRates>
      </LightMeter>
    </Page>
  );
}
